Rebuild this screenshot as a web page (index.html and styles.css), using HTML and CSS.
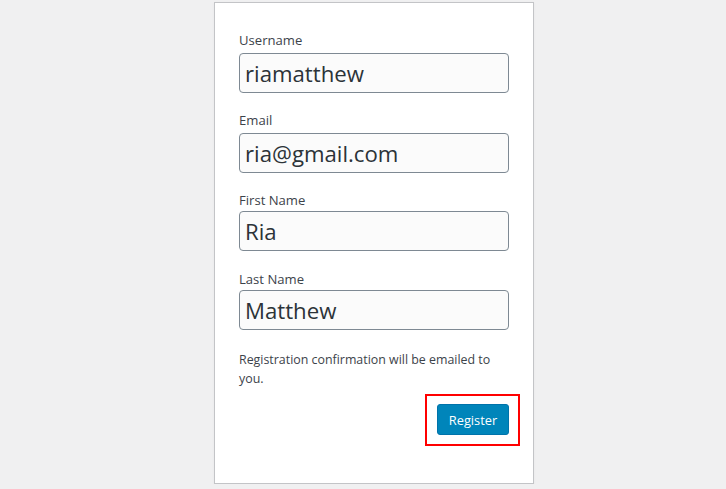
FILE: index.html
```html
<!DOCTYPE html>
<html lang="en">
<head>
<meta charset="utf-8">
<title>Register</title>
<link rel="stylesheet" href="styles.css">
</head>
<body>
<div class="page">
  <form class="card">
    <div class="field">
      <label class="label" for="u">Username</label>
      <input class="input" id="u" type="text" value="riamatthew">
    </div>
    <div class="field">
      <label class="label" for="e">Email</label>
      <input class="input" id="e" type="text" value="ria@gmail.com">
    </div>
    <div class="field field-extra">
      <label class="label" for="f">First Name</label>
      <input class="input" id="f" type="text" value="Ria">
    </div>
    <div class="field field-extra field-last">
      <label class="label" for="l">Last Name</label>
      <input class="input" id="l" type="text" value="Matthew">
    </div>
    <p class="note">Registration confirmation will be emailed to you.</p>
    <div class="actions">
      <div class="highlight">
        <button type="button" class="btn">Register</button>
      </div>
    </div>
  </form>
</div>
</body>
</html>
```
FILE: styles.css
```css
html, body {
  margin: 0;
  padding: 0;
  background: #f0f0f1;
}
body {
  font-family: "Open Sans", "Noto Sans", sans-serif;
  color: #3c434a;
}
.page {
  padding: 2px 0 0 214px;
}
.card {
  box-sizing: border-box;
  width: 320px;
  height: 482px;
  background: #fff;
  border: 1px solid #c3c4c7;
  box-shadow: 0 1px 3px rgba(0,0,0,.04);
  padding: 26px 24px 46px;
  display: flex;
  flex-direction: column;
}
.field {
  display: flex;
  flex-direction: column;
  margin-bottom: 16px;
}
.label {
  font-size: 13.1px;
  line-height: 21px;
  padding-top: 1px;
  margin-bottom: 2px;
  color: #3c434a;
}
.field-extra .label {
  margin-bottom: 0;
}
.field-last {
  margin-top: 1px;
}
.input {
  box-sizing: border-box;
  width: 270px;
  height: 40px;
  margin: 0;
  padding: 0 5px;
  font-family: inherit;
  font-size: 22.2px;
  color: #2c3338;
  background: #fbfbfb;
  border: 1px solid #7e8993;
  border-radius: 4px;
  outline: none;
}
.note {
  margin: 5px 0 0;
  font-size: 12.4px;
  line-height: 18.5px;
  color: #3c434a;
}
.actions {
  display: flex;
  justify-content: flex-end;
  margin-top: 6px;
  margin-right: -11px;
}
.highlight {
  border: 2px solid #ff0000;
  padding: 8px 9px 9px 10px;
}
.btn {
  box-sizing: border-box;
  height: 31px;
  width: 72px;
  padding: 0;
  font-family: inherit;
  font-size: 12.8px;
  color: #fff;
  background: #0085ba;
  border: 1px solid #0073aa;
  border-radius: 3px;
  cursor: pointer;
}
```
